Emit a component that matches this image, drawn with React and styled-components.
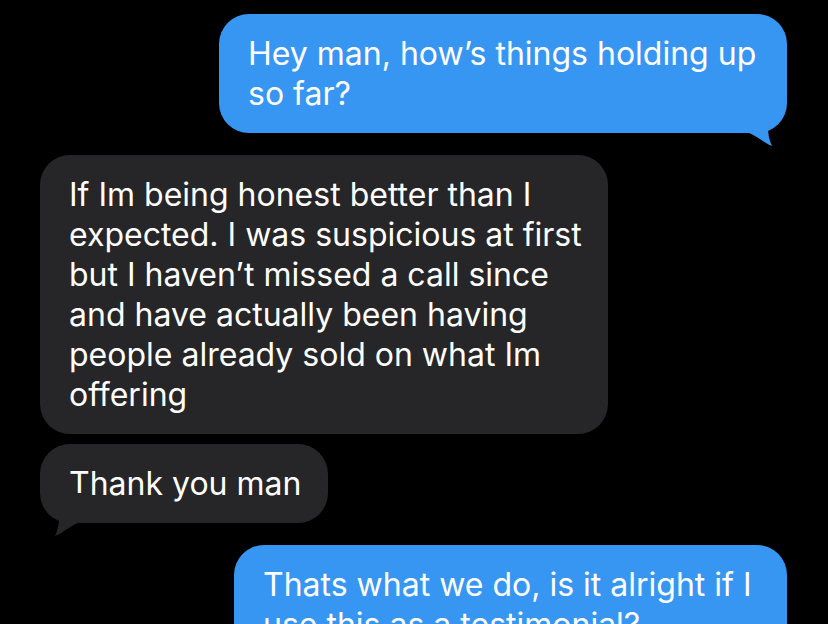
import styled, { createGlobalStyle } from "styled-components";

const GlobalStyle = createGlobalStyle`
  html, body {
    margin: 0;
    padding: 0;
    background: #000;
  }
  body {
    font-family: "Inter", "Liberation Sans", sans-serif;
    -webkit-font-smoothing: antialiased;
  }
`;

const Thread = styled.main`
  width: 828px;
  height: 624px;
  overflow: hidden;
  box-sizing: border-box;
  padding: 14px 41px 0 40px;
  display: flex;
  flex-direction: column;
  background: #000;
`;

const Bubble = styled.div`
  position: relative;
  align-self: ${(p) => (p.$mine ? "flex-end" : "flex-start")};
  width: ${(p) => p.$width}px;
  box-sizing: border-box;
  margin-top: ${(p) => p.$gap || 0}px;
  padding: 20px 26px 19px 29px;
  border-radius: 30px;
  background: ${(p) => (p.$mine ? "#3896f3" : "#262629")};
  color: #fff;
  font-size: 32px;
  line-height: 40px;
  letter-spacing: 0;
  white-space: nowrap;
`;

const Tail = styled.svg`
  position: absolute;
  bottom: -14px;
  width: 44px;
  height: 44px;
  ${(p) => (p.$mine ? "right: 0;" : "left: 0; transform: scaleX(-1);")}
`;

const BubbleTail = ({ mine }) => (
  <Tail $mine={mine} viewBox="0 0 44 44">
    <path
      d="M0 0 H43 C43 10 36 19 25 23 C25 31 26 37 29 43 C21 40 14 33 6 30 H0 Z"
      fill={mine ? "#3896f3" : "#262629"}
    />
  </Tail>
);

const Message = ({ mine, tail, width, gap, children }) => (
  <Bubble $mine={mine} $width={width} $gap={gap}>
    {children}
    {tail && <BubbleTail mine={mine} />}
  </Bubble>
);

export default function App() {
  return (
    <>
      <GlobalStyle />
      <Thread>
        <Message mine tail width={568}>
          Hey man, how’s things holding up
          <br />
          so far?
        </Message>
        <Message width={568} gap={22}>
          If Im being honest better than I
          <br />
          expected. I was suspicious at first
          <br />
          but I haven’t missed a call since
          <br />
          and have actually been having
          <br />
          people already sold on what Im
          <br />
          offering
        </Message>
        <Message tail width={288} gap={10}>
          Thank you man
        </Message>
        <Message mine width={553} gap={22}>
          Thats what we do, is it alright if I
          <br />
          use this as a testimonial?
        </Message>
      </Thread>
    </>
  );
}
